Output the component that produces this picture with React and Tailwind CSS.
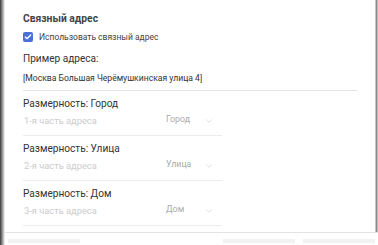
import React from 'react';
import { ChevronDown, Check } from 'lucide-react';

const dims = [
  { label: 'Размерность: Город', placeholder: '1-я часть адреса', value: 'Город' },
  { label: 'Размерность: Улица', placeholder: '2-я часть адреса', value: 'Улица' },
  { label: 'Размерность: Дом', placeholder: '3-я часть адреса', value: 'Дом' },
];

export default function App() {
  return (
    <div className="w-[378px] h-[245px] bg-white flex overflow-hidden text-[#333]" style={{ fontFamily: 'Roboto, "Liberation Sans", sans-serif' }}>
      <div className="w-[5px] h-full bg-gradient-to-r from-[#3a3a3a] via-[#9a9a9a] to-white" />
      <div className="flex-1 flex flex-col">
        <div className="h-[233px] flex border-b border-[#e3e3e3]">
          <div className="flex-1 pl-[18px] pr-[15px] pt-[11px]">
            <div className="text-[10.3px] font-bold leading-[15px] text-[#444]">Связный адрес</div>
            <label className="flex items-center gap-[6px] mt-[4px] h-[14px]">
              <span className="w-[10px] h-[10px] rounded-[2px] bg-[#4a6fd8] flex items-center justify-center">
                <Check className="w-[8px] h-[8px] text-white" strokeWidth={4} />
              </span>
              <span className="text-[8.5px] text-[#444]">Использовать связный адрес</span>
            </label>
            <div className="text-[10.1px] mt-[7px] leading-[15px]">Пример адреса:</div>
            <div className="text-[8.6px] mt-[5px] leading-[14px] pb-[5px] border-b border-[#e5e5e5] mr-[3px]">[Москва Большая Черёмушкинская улица 4]</div>
            {dims.map((d) => (
              <div key={d.label} className="mt-[5px]">
                <div className="text-[10.1px] leading-[15px]">{d.label}</div>
                <div className="w-[199px] h-[25px] pb-[4px] flex items-center border-b border-[#ececec] text-[9.3px]">
                  <span className="flex-1 text-[#ccc] pl-[1px]">{d.placeholder}</span>
                  <span className="text-[#aaa] text-[8.8px] w-[38px] -mt-[2px]">{d.value}</span>
                  <ChevronDown className="w-[10px] h-[10px] text-[#ccc] mr-[8px]" strokeWidth={1.5} />
                </div>
              </div>
            ))}
          </div>
          <div className="w-[3px] h-full bg-gradient-to-r from-[#e5e5e5] via-[#8a8a8a] to-[#d5d5d5]" />
        </div>
        <div className="flex-1 flex items-end pb-[2px] px-[3px] gap-[8px]">
          <div className="w-[72px] h-[4px] bg-[#f2f2f2]" />
          <div className="flex-1" />
          <div className="w-[72px] h-[4px] bg-[#f2f2f2]" />
          <div className="w-[72px] h-[4px] bg-[#f2f2f2]" />
        </div>
      </div>
    </div>
  );
}
